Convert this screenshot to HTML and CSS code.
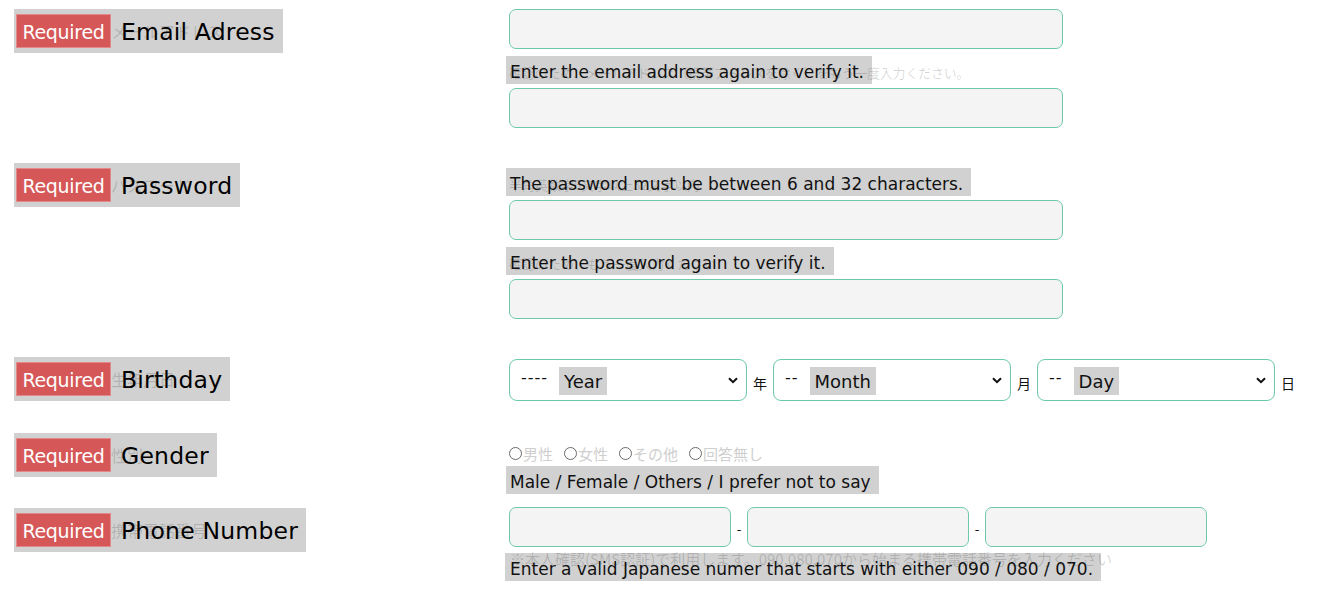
FILE: index.html
```html
<!DOCTYPE html>
<html lang="ja">
<head>
<meta charset="utf-8">
<title>Form</title>
<link rel="stylesheet" href="styles.css">
</head>
<body>
<div class="form">
  <div class="row row-email">
    <div class="label-col">
      <span class="label"><span class="badge">Required</span><span class="lbl-text"><span class="ja ja-lbl">メールアドレス</span>Email Adress</span></span>
    </div>
    <div class="field-col">
      <div class="input wide"></div>
      <div class="hint"><span class="ja ja-hint ja-email">確認のため、メールアドレス（携帯アドレスを除く）をもう一度入力ください。</span>Enter the email address again to verify it.</div>
      <div class="input wide"></div>
    </div>
  </div>

  <div class="row row-pass">
    <div class="label-col">
      <span class="label"><span class="badge">Required</span><span class="lbl-text"><span class="ja ja-lbl">パスワード</span>Password</span></span>
    </div>
    <div class="field-col">
      <div class="hint"><span class="ja ja-hint">半角英数字6文字以上32文字以内</span>The password must be between 6 and 32 characters.</div>
      <div class="input wide"></div>
      <div class="hint"><span class="ja ja-hint">確認のため、もう一度入力ください</span>Enter the password again to verify it.</div>
      <div class="input wide"></div>
    </div>
  </div>

  <div class="row row-birth">
    <div class="label-col">
      <span class="label"><span class="badge">Required</span><span class="lbl-text"><span class="ja ja-lbl">生年月日</span>Birthday</span></span>
    </div>
    <div class="field-col">
      <div class="date-line">
        <div class="select"><span class="dash">----</span><span class="opt">Year</span><span class="chev"><svg width="10" height="7" viewBox="0 0 10 7"><path d="M1 1.2 L5 5.2 L9 1.2" fill="none" stroke="#111" stroke-width="2"/></svg></span></div>
        <span class="unit">年</span>
        <div class="select"><span class="dash">--</span><span class="opt">Month</span><span class="chev"><svg width="10" height="7" viewBox="0 0 10 7"><path d="M1 1.2 L5 5.2 L9 1.2" fill="none" stroke="#111" stroke-width="2"/></svg></span></div>
        <span class="unit">月</span>
        <div class="select"><span class="dash">--</span><span class="opt">Day</span><span class="chev"><svg width="10" height="7" viewBox="0 0 10 7"><path d="M1 1.2 L5 5.2 L9 1.2" fill="none" stroke="#111" stroke-width="2"/></svg></span></div>
        <span class="unit">日</span>
      </div>
    </div>
  </div>

  <div class="row row-gender">
    <div class="label-col">
      <span class="label"><span class="badge">Required</span><span class="lbl-text gender-text"><span class="ja ja-lbl">性別</span>Gender</span></span>
    </div>
    <div class="field-col">
      <div class="radios">
        <span class="radio"><span class="circle"></span>男性</span>
        <span class="radio"><span class="circle"></span>女性</span>
        <span class="radio"><span class="circle"></span>その他</span>
        <span class="radio"><span class="circle"></span>回答無し</span>
      </div>
      <div class="hint hint-gender">Male / Female / Others / I prefer not to say</div>
    </div>
  </div>

  <div class="row row-phone">
    <div class="label-col">
      <span class="label"><span class="badge">Required</span><span class="lbl-text"><span class="ja ja-lbl">携帯電話番号</span>Phone Number</span></span>
    </div>
    <div class="field-col">
      <div class="phone-line">
        <div class="input tel"></div>
        <span class="sep">-</span>
        <div class="input tel"></div>
        <span class="sep">-</span>
        <div class="input tel"></div>
      </div>
      <div class="hint hint-phone"><span class="ja ja-phone">※本人確認(SMS認証)で利用します。090,080,070から始まる携帯電話番号を入力ください</span>Enter a valid Japanese numer that starts with either 090 / 080 / 070.</div>
    </div>
  </div>
</div>
</body>
</html>
```

FILE: styles.css
```css
* { box-sizing: border-box; }
html, body { margin: 0; padding: 0; background: #fff; }
body {
  font-family: "DejaVu Sans", "Noto Sans CJK JP", sans-serif;
  color: #111;
}
.form { padding: 9px 0 0 14px; }
.row { display: flex; align-items: flex-start; }
.label-col { width: 495px; flex: none; }
.field-col { flex: 1; display: flex; flex-direction: column; align-items: flex-start; }

.label {
  display: inline-flex;
  align-items: center;
  height: 44px;
  background: #d1d1d1;
  padding: 0 8px 0 2px;
}
.badge {
  display: inline-block;
  width: 95px;
  height: 34px;
  line-height: 34px;
  text-align: center;
  background: #d65757;
  color: #fff;
  font-size: 19px;
  border: 1px solid #e28a8a;
  letter-spacing: -0.3px;
}
.lbl-text {
  position: relative;
  margin-left: 10px;
  font-size: 23.5px;
  color: #000;
  letter-spacing: 0.2px;
  line-height: 44px;
  padding-top: 2px;
}
.ja {
  position: absolute;
  white-space: nowrap;
  color: rgba(0, 0, 0, 0.16);
  z-index: 1;
  letter-spacing: 0;
  font-family: "Noto Sans CJK JP", sans-serif;
}
.ja-lbl { left: -10px; top: 1px; font-size: 16px; }

.input {
  height: 40px;
  background: #f4f4f4;
  border: 1px solid #6ecaa6;
  border-radius: 7px;
}
.input.wide { width: 554px; }

.hint {
  position: relative;
  display: inline-block;
  height: 28px;
  margin: 7px 0 4px -3px;
  padding: 4px 8px 0 4px;
  background: #d1d1d1;
  font-size: 17px;
  line-height: 24px;
  color: #111;
  white-space: nowrap;
}
.ja-hint { left: 3px; top: 4px; font-size: 13px; line-height: 25px; }
.ja-email { letter-spacing: -0.2px; }

.row-pass { margin-top: 35px; }
.row-pass .field-col { padding-top: 5px; }
.row-pass .field-col .hint:first-child { margin-top: 0; }

.row-birth { margin-top: 38px; }
.row-birth .field-col { padding-top: 2px; }
.date-line { display: flex; align-items: center; }
.select {
  width: 238px;
  height: 42px;
  border: 1px solid #6ecaa6;
  border-radius: 8px;
  background: #fff;
  display: flex;
  align-items: center;
  padding: 0 0 0 11px;
  position: relative;
}
.dash { font-size: 16px; color: #111; margin-top: -6px; letter-spacing: 1px; }
.opt {
  margin-left: 11px;
  background: #d1d1d1;
  height: 28px;
  line-height: 30px;
  padding: 0 5px;
  font-size: 18px;
  margin-top: 2px;
}
.chev { margin-left: auto; margin-right: 8px; display: flex; }
.unit {
  font-family: "Noto Sans CJK JP", sans-serif;
  font-size: 14px;
  color: #111;
  margin: 6px 6px 0 6px;
  width: 14px;
}

.row-gender { margin-top: 32px; }
.row-gender .field-col { padding-top: 10px; }
.radios {
  display: flex;
  height: 20px;
  align-items: center;
  font-family: "Noto Sans CJK JP", sans-serif;
  font-size: 15px;
  color: #cfcfcf;
}
.radio { display: inline-flex; align-items: center; margin-right: 11px; }
.circle {
  width: 13px; height: 13px;
  border: 1.5px solid #6b6b6b;
  border-radius: 50%;
  display: inline-block;
  margin-right: 1px;
}
.hint-gender { margin-top: 3px; }

.row-phone { margin-top: 9px; }
.row-phone .label { margin-top: 1px; }
.phone-line { display: flex; align-items: center; }
.input.tel { width: 222px; }
.sep { width: 16px; text-align: center; font-size: 13px; margin-top: 4px; }
.hint-phone { margin-top: 6px; margin-left: -4px; padding-left: 5px; padding-top: 5px; line-height: 23px; }
.ja-phone { left: 5px; top: -6px; font-size: 15px; }
```
